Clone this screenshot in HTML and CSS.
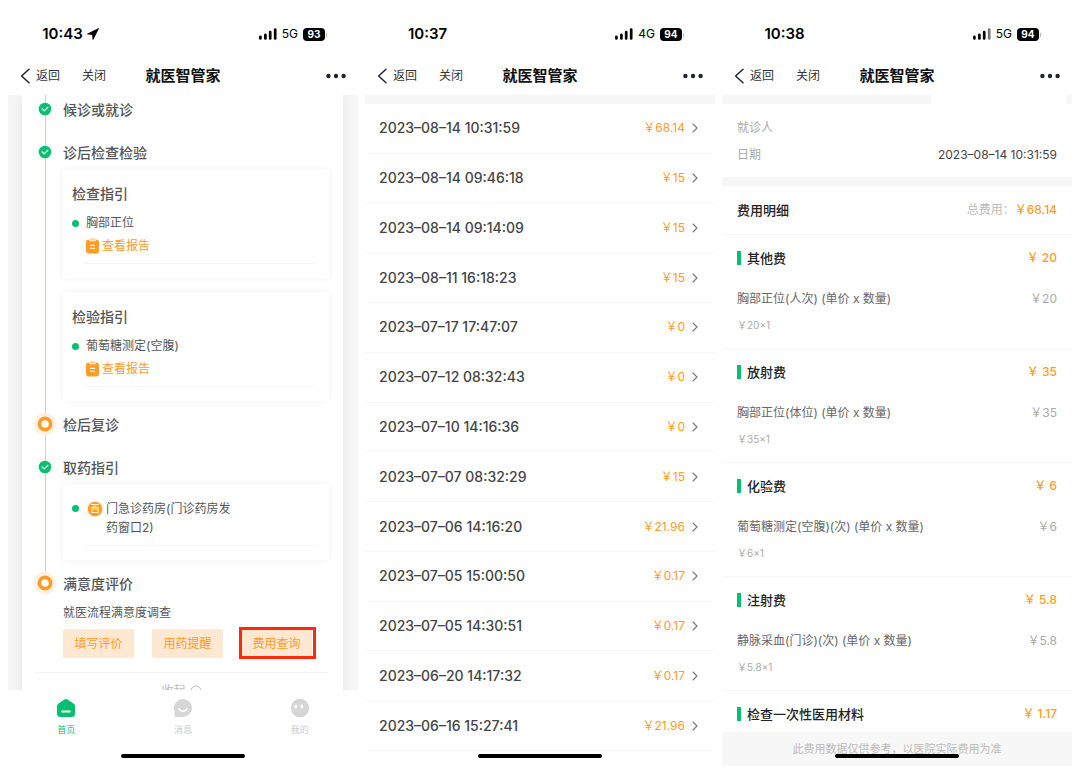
FILE: index.html
```html
<!DOCTYPE html>
<html lang="zh-CN">
<head>
<meta charset="utf-8">
<meta name="viewport" content="width=device-width, initial-scale=1">
<title>就医智管家</title>
<link rel="stylesheet" href="styles.css">
</head>
<body>
<svg class="sprite" aria-hidden="true">
  <symbol id="back" viewBox="0 0 10 16"><path d="M9 1.2 1.6 8 9 14.8" fill="none" stroke="#23252e" stroke-width="1.5" stroke-linecap="round" stroke-linejoin="round"/></symbol>
  <symbol id="dots" viewBox="0 0 20 6"><g fill="#23252e"><circle cx="2.4" cy="3" r="2.2"/><circle cx="10" cy="3" r="2.2"/><circle cx="17.6" cy="3" r="2.2"/></g></symbol>
  <symbol id="signal" viewBox="0 0 18 12"><path d="M1.4 8.8v1.6M6.4 6.8v3.600M11.2 4v6.4" fill="none" stroke="#000" stroke-width="2.7" stroke-linecap="round"/><path d="M16.2 1.6v8.8" fill="none" stroke="currentColor" stroke-width="2.7" stroke-linecap="round"/></symbol>
  <symbol id="next" viewBox="0 0 6 10"><path d="M1 1l4 4-4 4" fill="none" stroke="#777" stroke-width="1.1" stroke-linecap="round" stroke-linejoin="round"/></symbol>
  <symbol id="done" viewBox="0 0 22 22"><circle cx="11" cy="11" r="6.3" fill="#06bf71"/><path d="M8.2 11l2 1.9 3.7-3.6" fill="none" stroke="#e6fff3" stroke-width="1.2" stroke-linecap="round" stroke-linejoin="round"/></symbol>
  <symbol id="current" viewBox="0 0 22 22"><circle cx="11" cy="11" r="11" fill="#fff1e2"/><circle cx="11" cy="11" r="5.6" fill="#fff" stroke="#ff9b26" stroke-width="3.6"/></symbol>
  <symbol id="report" viewBox="0 0 13 16"><rect y="1.5" width="13" height="14" rx="3" fill="#ff9b26"/><rect x="3" y="0" width="7" height="3" rx="1.5" fill="#ffd3a0" stroke="#fff" stroke-width=".6"/><path d="M4 7.4h5M4 10.2h5" stroke="#fff" stroke-width="1.1"/></symbol>
</svg>

<main class="screens">
  <section class="phone">
    <div class="status">
      <div class="clock">10:43<svg class="locate" viewBox="0 0 12 12"><path d="M11.600.500.500 6l5 .500.500 5z" fill="#000" stroke="#000" stroke-width=".8" stroke-linejoin="round"/></svg></div>
      <div class="radio"><svg class="signal"><use href="#signal"/></svg><span>5G</span><span class="battery">93</span></div>
    </div>
    <header class="nav">
      <div class="nav-left"><button class="plain back"><svg><use href="#back"/></svg>返回</button><button class="plain">关闭</button></div>
      <h1>就医智管家</h1>
      <button class="plain more" aria-label="更多"><svg><use href="#dots"/></svg></button>
    </header>
    <div class="scroll visit">
      <div class="sheet">
        <div class="step first">
          <div class="rail"><svg><use href="#done"/></svg></div>
          <div class="step-body"><h2>候诊或就诊</h2></div>
        </div>
        <div class="step">
          <div class="rail"><svg><use href="#done"/></svg></div>
          <div class="step-body">
            <h2>诊后检查检验</h2>
            <div class="cards">
              <article class="card">
                <h3>检查指引</h3>
                <p class="bullet">胸部正位</p>
                <a class="report" href="#"><svg><use href="#report"/></svg>查看报告</a>
              </article>
              <article class="card">
                <h3>检验指引</h3>
                <p class="bullet">葡萄糖测定(空腹)</p>
                <a class="report" href="#"><svg><use href="#report"/></svg>查看报告</a>
              </article>
            </div>
          </div>
        </div>
        <div class="step pending">
          <div class="rail"><svg><use href="#current"/></svg></div>
          <div class="step-body"><h2>检后复诊</h2></div>
        </div>
        <div class="step">
          <div class="rail"><svg><use href="#done"/></svg></div>
          <div class="step-body">
            <h2>取药指引</h2>
            <div class="cards">
              <article class="card pharmacy">
                <div class="bullet"><span class="badge">西</span><p>门急诊药房(门诊药房发药窗口2)</p></div>
              </article>
            </div>
          </div>
        </div>
        <div class="step last">
          <div class="rail"><svg><use href="#current"/></svg></div>
          <div class="step-body">
            <h2>满意度评价</h2>
            <p class="survey">就医流程满意度调查</p>
            <div class="actions">
              <button>填写评价</button>
              <button>用药提醒</button>
              <button class="marked">费用查询</button>
            </div>
          </div>
        </div>
        <button class="plain fold">收起<svg viewBox="0 0 12 12"><circle cx="6" cy="6" r="5" fill="none" stroke="#bbb"/><path d="M4 6.8 6 4.8l2 2" fill="none" stroke="#bbb"/></svg></button>
      </div>
    </div>
    <nav class="tabs">
      <a class="active" href="#"><svg viewBox="0 0 20 20"><path d="M10 1q1 0 2 .7l5.5 3.7Q19 6.500 19 8v7.500Q19 19 15.500 19h-11Q1 19 1 15.500V8q0-1.500 1.500-2.600L8 1.700Q9 1 10 1z" fill="#06bf71"/><path d="M6.200 13.500h7.600" stroke="#fff" stroke-width="1.800" stroke-linecap="round"/></svg>首页</a>
      <a href="#"><svg viewBox="0 0 20 20"><path d="M10 1a9 9 0 1 1 0 18H3q-1.500 0-1.500-1.500V13A9 9 0 0 1 10 1z" fill="#d6d6d6"/><path d="M5.800 10.800q4.200 5.200 8.400 0" fill="none" stroke="#fff" stroke-width="1.700" stroke-linecap="round"/></svg>消息</a>
      <a href="#"><svg viewBox="0 0 20 20"><circle cx="10" cy="10" r="9.200" fill="#d6d6d6"/><ellipse cx="5.800" cy="8.500" rx="1.300" ry="1.900" fill="#fff"/><ellipse cx="11.800" cy="8.500" rx="1.300" ry="1.900" fill="#fff"/></svg>我的</a>
    </nav>
    <div class="home"></div>
  </section>

  <section class="phone">
    <div class="status">
      <div class="clock">10:37</div>
      <div class="radio"><svg class="signal"><use href="#signal"/></svg><span>4G</span><span class="battery">94</span></div>
    </div>
    <header class="nav">
      <div class="nav-left"><button class="plain back"><svg><use href="#back"/></svg>返回</button><button class="plain">关闭</button></div>
      <h1>就医智管家</h1>
      <button class="plain more" aria-label="更多"><svg><use href="#dots"/></svg></button>
    </header>
    <div class="band"></div>
    <ul class="bills">
      <li><a href="#"><time>2023–08–14 10:31:59</time><span>&#65509;68.14</span><svg><use href="#next"/></svg></a></li>
      <li><a href="#"><time>2023–08–14 09:46:18</time><span>&#65509;15</span><svg><use href="#next"/></svg></a></li>
      <li><a href="#"><time>2023–08–14 09:14:09</time><span>&#65509;15</span><svg><use href="#next"/></svg></a></li>
      <li><a href="#"><time>2023–08–11 16:18:23</time><span>&#65509;15</span><svg><use href="#next"/></svg></a></li>
      <li><a href="#"><time>2023–07–17 17:47:07</time><span>&#65509;0</span><svg><use href="#next"/></svg></a></li>
      <li><a href="#"><time>2023–07–12 08:32:43</time><span>&#65509;0</span><svg><use href="#next"/></svg></a></li>
      <li><a href="#"><time>2023–07–10 14:16:36</time><span>&#65509;0</span><svg><use href="#next"/></svg></a></li>
      <li><a href="#"><time>2023–07–07 08:32:29</time><span>&#65509;15</span><svg><use href="#next"/></svg></a></li>
      <li><a href="#"><time>2023–07–06 14:16:20</time><span>&#65509;21.96</span><svg><use href="#next"/></svg></a></li>
      <li><a href="#"><time>2023–07–05 15:00:50</time><span>&#65509;0.17</span><svg><use href="#next"/></svg></a></li>
      <li><a href="#"><time>2023–07–05 14:30:51</time><span>&#65509;0.17</span><svg><use href="#next"/></svg></a></li>
      <li><a href="#"><time>2023–06–20 14:17:32</time><span>&#65509;0.17</span><svg><use href="#next"/></svg></a></li>
      <li><a href="#"><time>2023–06–16 15:27:41</time><span>&#65509;21.96</span><svg><use href="#next"/></svg></a></li>
    </ul>
    <div class="home"></div>
  </section>

  <section class="phone">
    <div class="status">
      <div class="clock">10:38</div>
      <div class="radio"><svg class="signal weak"><use href="#signal"/></svg><span>5G</span><span class="battery">94</span></div>
    </div>
    <header class="nav">
      <div class="nav-left"><button class="plain back"><svg><use href="#back"/></svg>返回</button><button class="plain">关闭</button></div>
      <h1>就医智管家</h1>
      <button class="plain more" aria-label="更多"><svg><use href="#dots"/></svg></button>
    </header>
    <div class="scroll">
      <div class="band masked"><span></span></div>
      <dl class="info">
        <div><dt>就诊人</dt><dd></dd></div>
        <div><dt>日期</dt><dd>2023–08–14 10:31:59</dd></div>
      </dl>
      <div class="band"></div>
      <div class="summary"><h2>费用明细</h2><p>总费用：<strong>&#65509;68.14</strong></p></div>
      <section class="fee">
        <h3><span>其他费</span><strong>&#65509; 20</strong></h3>
        <p class="line"><span>胸部正位(人次) (单价 x 数量)</span><span class="price">&#65509;20</span></p>
        <p class="unit">&#65509;20×1</p>
      </section>
      <section class="fee">
        <h3><span>放射费</span><strong>&#65509; 35</strong></h3>
        <p class="line"><span>胸部正位(体位) (单价 x 数量)</span><span class="price">&#65509;35</span></p>
        <p class="unit">&#65509;35×1</p>
      </section>
      <section class="fee">
        <h3><span>化验费</span><strong>&#65509; 6</strong></h3>
        <p class="line"><span>葡萄糖测定(空腹)(次) (单价 x 数量)</span><span class="price">&#65509;6</span></p>
        <p class="unit">&#65509;6×1</p>
      </section>
      <section class="fee">
        <h3><span>注射费</span><strong>&#65509; 5.8</strong></h3>
        <p class="line"><span>静脉采血(门诊)(次) (单价 x 数量)</span><span class="price">&#65509;5.8</span></p>
        <p class="unit">&#65509;5.8×1</p>
      </section>
      <section class="fee">
        <h3><span>检查一次性医用材料</span><strong>&#65509; 1.17</strong></h3>
      </section>
    </div>
    <footer class="note">此费用数据仅供参考，以医院实际费用为准</footer>
    <div class="home"></div>
  </section>
</main>
</body>
</html>
```

FILE: styles.css
```css
* { box-sizing: border-box; }

body {
  margin: 0;
  background: #fff;
  color: #555;
  font: 12px/24px Inter, "Noto Sans CJK SC", sans-serif;
}

h1, h2, h3, p, ul, dl, dd { margin: 0; padding: 0; }
ul { list-style: none; }
a { color: inherit; text-decoration: none; }
button { font: inherit; cursor: pointer; }
svg { flex: none; display: block; }
.sprite { display: none; }

.plain { padding: 0; border: 0; background: none; color: inherit; }

.screens {
  display: grid;
  grid-template-columns: repeat(3, 1fr);
  gap: 7px;
  height: 100vh;
  padding: 0 8px;
}

.phone {
  position: relative;
  display: flex;
  flex-direction: column;
  min-width: 0;
  min-height: 0;
}

.home {
  position: absolute;
  bottom: 15px;
  left: 50%;
  width: 124px;
  height: 4px;
  margin-left: -62px;
  border-radius: 2px;
  background: #000;
}

/* Status bar */
.status {
  display: flex;
  flex: none;
  align-items: center;
  justify-content: space-between;
  height: 56px;
  padding: 12px 30px 0 0;
  color: #000;
}
.clock {
  display: flex;
  align-items: center;
  justify-content: center;
  gap: 4px;
  width: 125px;
  font-size: 15px;
  font-weight: 600;
}
.locate { width: 12px; height: 12px; }
.radio { display: flex; align-items: center; gap: 5px; }
.signal { width: 18px; height: 12px; }
.signal.weak { color: #777; }
.battery {
  position: relative;
  width: 22px;
  margin-right: 3px;
  border-radius: 4px;
  background: #000;
  color: #fff;
  font-size: 10px;
  font-weight: 700;
  line-height: 13px;
  text-align: center;
}
.battery::after {
  content: "";
  position: absolute;
  top: 5px;
  right: -2px;
  width: 1px;
  height: 4px;
  background: #bbb;
}

/* Navigation bar */
.nav {
  display: grid;
  flex: none;
  grid-template-columns: 1fr auto 1fr;
  align-items: center;
  height: 39px;
  padding: 0 12px;
  color: #333;
}
.nav-left { display: flex; gap: 22px; }
.back { display: flex; align-items: center; gap: 6px; }
.back svg { width: 10px; height: 16px; }
.nav h1 { color: #111; font-size: 15px; font-weight: 600; }
.more { justify-self: end; }
.more svg { width: 20px; height: 6px; }

.scroll { flex: 1; min-height: 0; overflow: hidden; }
.band { flex: none; height: 9px; background: #f7f7f7; }

/* Visit timeline */
.visit { padding: 0 15px 0 14px; background: #f6f6f6; }
.sheet {
  min-height: 100%;
  padding: 0 14px 0 12px;
  background: #fff;
  box-shadow: 0 0 12px rgba(0, 0, 0, 0.07);
}
.step { display: flex; gap: 7px; }
.rail {
  flex: none;
  width: 22px;
  background: linear-gradient(#a4e8cb, #a4e8cb) center / 1px 100% no-repeat;
}
.rail svg { width: 22px; height: 22px; }
.pending .rail { background-image: linear-gradient(#d4d4d4, #d4d4d4); }
.last .rail { background: none; }
.first .rail, .first .step-body { padding-top: 3px; }
.step-body { flex: 1; padding-bottom: 19px; }
.step-body h2, .card h3 { font-size: 14px; font-weight: 500; }

.cards {
  display: grid;
  gap: 15px;
  margin: 5px 0 -7px;
}
.card {
  padding: 12px 14px 14px 9px;
  background: #fff;
  box-shadow: 0 0 8px rgba(0, 0, 0, 0.06);
}
.card::after {
  content: "";
  display: block;
  height: 1px;
  margin: 6px 0 0 12px;
  background: #f6f6f6;
}
.bullet { display: flex; align-items: center; gap: 7px; }
.card h3 + .bullet { margin-top: 5px; }
.bullet::before {
  content: "";
  flex: none;
  width: 7px;
  height: 7px;
  border-radius: 50%;
  background: #06bf71;
}
.report {
  display: flex;
  align-items: center;
  gap: 3px;
  padding-left: 14px;
  color: #ff9b26;
  line-height: 22px;
}
.report svg { width: 13px; height: 16px; }

.pharmacy { padding-top: 14px; line-height: 19px; }
.pharmacy::after { margin-top: 8px; }
.pharmacy .bullet { align-items: flex-start; gap: 4px; }
.pharmacy .bullet::before { margin: 6px 5px 0 0; }
.pharmacy p { max-width: 130px; }
.badge {
  flex: none;
  width: 14px;
  margin-top: 3px;
  border-radius: 50%;
  background: #ff9b26;
  box-shadow: 0 0 2px #ff9b26;
  color: #fff;
  font-size: 9px;
  line-height: 14px;
  text-align: center;
}

.last .step-body { padding-bottom: 14px; }
.survey { margin-top: 5px; }
.actions { display: flex; gap: 18px; margin-top: 4px; }
.actions button {
  position: relative;
  min-width: 71px;
  height: 29px;
  padding: 0;
  border: 0;
  border-radius: 2px;
  background: #ffe8d1;
  color: #ff9b26;
}
.actions .marked::after {
  content: "";
  position: absolute;
  inset: -2px -4px -1px -2px;
  border: 3px solid #fb2b11;
}
.fold {
  display: flex;
  align-items: center;
  justify-content: center;
  gap: 4px;
  width: 100%;
  padding-top: 6px;
  border-top: 1px solid #f4f4f4;
  color: #bbb;
}
.fold svg { width: 12px; height: 12px; }

.tabs {
  display: grid;
  flex: none;
  grid-template-columns: repeat(3, 1fr);
  height: 83px;
  padding-top: 8px;
  color: #ccc;
  font-size: 9px;
  line-height: 21px;
}
.tabs a { display: flex; flex-direction: column; align-items: center; gap: 1px; }
.tabs svg { width: 20px; height: 20px; }
.tabs .active { color: #06bf71; }

/* Bill list */
.bills {
  display: grid;
  flex: 1;
  grid-auto-rows: 1fr;
  min-height: 0;
  margin-bottom: 22px;
}
.bills li { border-bottom: 1px solid #f7f7f7; }
.bills a {
  display: flex;
  align-items: center;
  height: 100%;
  padding: 0 17px 0 14px;
}
.bills time { flex: 1; color: #444; font-size: 14px; font-weight: 500; }
.bills span { color: #ff9b26; }
.bills svg { width: 6px; height: 10px; margin-left: 7px; }

/* Bill details */
.masked span {
  display: block;
  width: 135px;
  height: 9px;
  margin: 0 6px 0 auto;
  background: #fff;
}
.info { padding: 10px 15px 9px; line-height: 27px; }
.info div { display: flex; justify-content: space-between; }
.info dt { color: #aaa; }
.info dd { color: #444; }

.summary {
  display: flex;
  align-items: center;
  justify-content: space-between;
  height: 48px;
  padding: 0 15px;
}
.summary h2 { color: #222; font-size: 13px; font-weight: 500; }
.summary p { color: #bbb; }
.summary strong, .fee strong { color: #ff9b26; font-weight: 500; }

.fee { padding: 0 15px 10px; border-top: 1px solid #f7f7f7; line-height: 26px; }
.fee h3 {
  display: flex;
  align-items: center;
  justify-content: space-between;
  height: 46px;
  margin-bottom: 5px;
  color: #222;
  font-size: 13px;
  font-weight: 500;
}
.fee h3 span { display: flex; align-items: center; gap: 6px; }
.fee h3 span::before {
  content: "";
  width: 4px;
  height: 14px;
  background: #06bf71;
}
.fee strong { font-size: 12px; }
.line { display: flex; justify-content: space-between; color: #666; }
.price { color: #aaa; }
.unit { color: #aaa; font-size: 10px; }

.note {
  flex: none;
  margin-bottom: 7px;
  background: #f7f7f7;
  color: #bbb;
  font-size: 11px;
  line-height: 34px;
  text-align: center;
}
```
